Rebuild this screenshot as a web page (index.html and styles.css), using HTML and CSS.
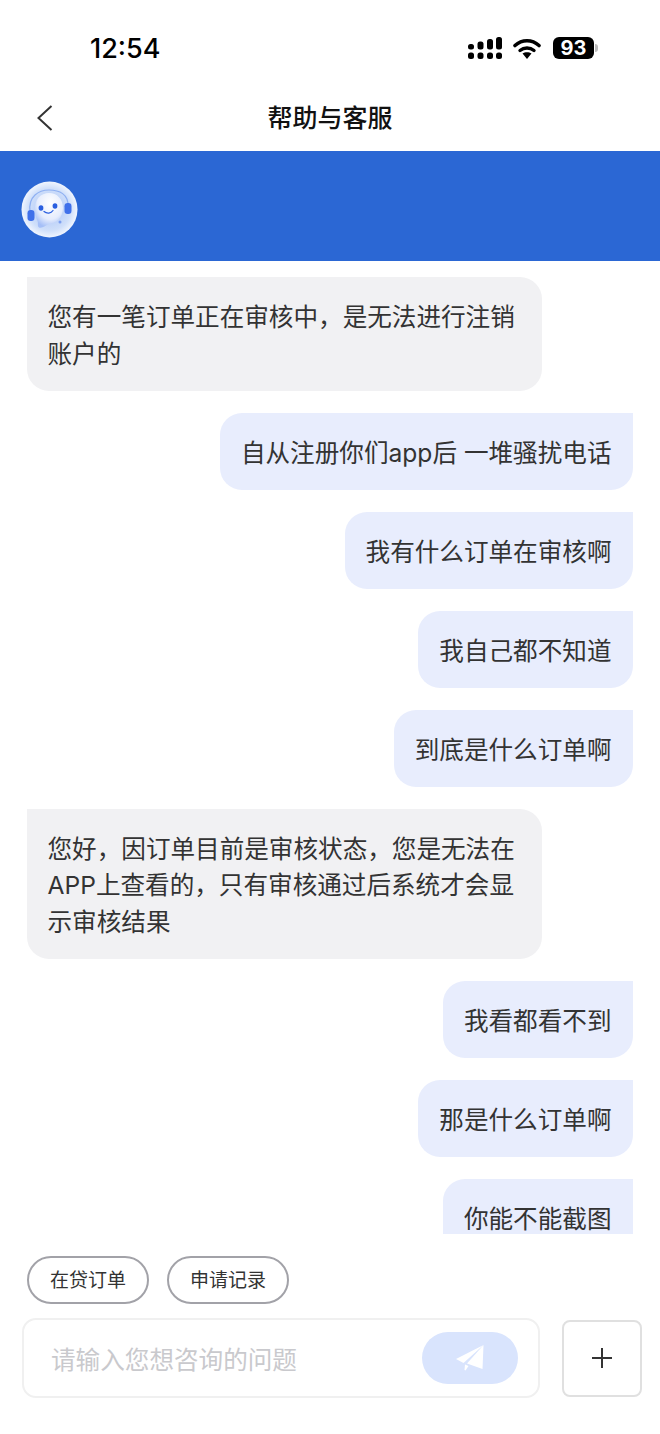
FILE: index.html
```html
<!DOCTYPE html>
<html lang="zh-CN">
<head>
    <meta charset="UTF-8">
    <meta name="viewport" content="width=device-width, initial-scale=1.0">
    <title>帮助与客服</title>
    <link rel="stylesheet" href="styles.css">
</head>
<body>
    <div class="page">
        <div class="status-bar">
            <span class="time">12:54</span>
            <div class="status-icons">
                <svg class="signal" width="34" height="22" viewBox="0 0 34 22">
                    <g fill="#000">
                        <rect x="0" y="7" width="6" height="5.5" rx="2.5"/>
                        <rect x="9.5" y="4.5" width="6" height="8" rx="2.5"/>
                        <rect x="19" y="2" width="6" height="10.5" rx="2.5"/>
                        <rect x="28" y="0" width="6" height="12.5" rx="2.5"/>
                        <rect x="0" y="15.5" width="6" height="6.5" rx="2.5"/>
                        <rect x="9.5" y="15.5" width="6" height="6.5" rx="2.5"/>
                        <rect x="19" y="15.5" width="6" height="6.5" rx="2.5"/>
                        <rect x="28" y="15.5" width="6" height="6.5" rx="2.5"/>
                    </g>
                </svg>
                <svg class="wifi" width="28" height="21" viewBox="0 0 28 21">
                    <path d="M2 7.5C9 1.2 19 1.2 26 7.5" fill="none" stroke="#000" stroke-width="3.6" stroke-linecap="round"/>
                    <path d="M7 12.5C11 9.2 17 9.2 21 12.5" fill="none" stroke="#000" stroke-width="3.4" stroke-linecap="round"/>
                    <path d="M9.5 15.5C12 13.8 16 13.8 18.5 15.5L14 21Z" fill="#000"/>
                </svg>
                <div class="battery">
                    <div class="battery-body">93</div>
                    <div class="battery-nub"></div>
                </div>
            </div>
        </div>

        <div class="nav-bar">
            <svg class="back-icon" width="16" height="26" viewBox="0 0 16 26">
                <path d="M14.5 1L1.5 13L14.5 25" fill="none" stroke="#333" stroke-width="2"/>
            </svg>
            <div class="nav-title">帮助与客服</div>
        </div>

        <div class="banner">
            <svg class="avatar" width="57" height="57" viewBox="0 0 57 57">
                <defs>
                    <radialGradient id="discFill" cx="50%" cy="50%" r="50%">
                        <stop offset="0%" stop-color="#a8c2f6"/>
                        <stop offset="75%" stop-color="#cfdffa"/>
                        <stop offset="100%" stop-color="#f0f5fe"/>
                    </radialGradient>
                    <radialGradient id="headFill" cx="55%" cy="30%" r="70%">
                        <stop offset="0%" stop-color="#ffffff"/>
                        <stop offset="65%" stop-color="#e6edfd"/>
                        <stop offset="100%" stop-color="#a5bff7"/>
                    </radialGradient>
                </defs>
                <circle cx="28.5" cy="28.5" r="28" fill="url(#discFill)"/>
                <path d="M9 31C7 15 18 9 28 9C38 9 48 13 47 26" fill="none" stroke="#8fb0f2" stroke-width="1.2"/>
                <path d="M14 30C13 18 20 12 28 12C36 12 42 18 42 27C42 37 35 42 28 43C25 44 21 48 18 46.500C16 45 17.500 42 16.500 40C15 37 14 33 14 30Z" fill="url(#headFill)"/>
                <rect x="6.500" y="29" width="7" height="11" rx="3.200" fill="#3f70ea"/>
                <rect x="43.500" y="22" width="7" height="11" rx="3.200" fill="#3f70ea"/>
                <ellipse cx="20" cy="27" rx="2.400" ry="2.800" fill="#2a5fe0"/>
                <ellipse cx="34" cy="25" rx="2.400" ry="2.800" fill="#2a5fe0"/>
                <path d="M23 30.500C26 33 30 32.500 32 29.500" fill="none" stroke="#2a5fe0" stroke-width="1.200" stroke-linecap="round"/>
                <circle cx="39" cy="41" r="1.500" fill="#7ea0f0"/>
            </svg>
        </div>

        <div class="chat">
            <div class="bubble bubble-left">您有一笔订单正在审核中，是无法进行注销账户的</div>
            <div class="bubble bubble-right">自从注册你们app后 一堆骚扰电话</div>
            <div class="bubble bubble-right">我有什么订单在审核啊</div>
            <div class="bubble bubble-right">我自己都不知道</div>
            <div class="bubble bubble-right">到底是什么订单啊</div>
            <div class="bubble bubble-left">您好，因订单目前是审核状态，您是无法在APP上查看的，只有审核通过后系统才会显示审核结果</div>
            <div class="bubble bubble-right">我看都看不到</div>
            <div class="bubble bubble-right">那是什么订单啊</div>
            <div class="bubble bubble-right">你能不能截图</div>
        </div>

        <div class="chips">
            <div class="chip">在贷订单</div>
            <div class="chip">申请记录</div>
        </div>

        <div class="input-row">
            <div class="input-box">
                <div class="placeholder">请输入您想咨询的问题</div>
                <div class="send-button">
                    <svg width="28" height="26" viewBox="0 0 28 26">
                        <path d="M27.500 0L0 14L7.500 18Z" fill="#fff"/>
                        <path d="M27.500 0L11 18.500L26.500 24Z" fill="#fff"/>
                        <path d="M9 19.500L12.500 21L9.500 25.500L8.500 25Z" fill="#fff"/>
                    </svg>
                </div>
            </div>
            <div class="plus-button">
                <svg width="20" height="20" viewBox="0 0 20 20">
                    <path d="M0 10H20M10 0V20" stroke="#333" stroke-width="2"/>
                </svg>
            </div>
        </div>
    </div>
</body>
</html>
```

FILE: styles.css
```css
body {
    margin: 0;
    background: #fff;
    font-family: "Inter", "Noto Sans CJK SC", sans-serif;
    color: #333;
}

.page {
    width: 660px;
    height: 1434px;
    display: flex;
    flex-direction: column;
    overflow: hidden;
}

.status-bar {
    height: 72px;
    padding: 12px 62px 1px 90px;
    display: flex;
    justify-content: space-between;
    align-items: center;
}

.time {
    font-size: 27px;
    font-weight: 500;
    color: #000;
}

.status-icons {
    display: flex;
    align-items: center;
    gap: 11px;
}

.battery {
    display: flex;
    align-items: center;
    margin-left: 1px;
}

.battery-body {
    width: 41px;
    height: 22px;
    background: #000;
    border-radius: 6px;
    color: #fff;
    font-size: 20px;
    font-weight: 700;
    line-height: 22px;
    text-align: center;
}

.battery-nub {
    width: 3px;
    height: 8px;
    margin-left: 1px;
    background: #bbb;
    border-radius: 0 3px 3px 0;
}

.nav-bar {
    height: 66px;
    padding-left: 37px;
    display: flex;
    align-items: center;
    position: relative;
}

.nav-title {
    position: absolute;
    left: 0;
    right: 0;
    top: 15px;
    text-align: center;
    font-size: 25px;
    line-height: 36px;
    font-weight: 500;
    color: #111;
}

.banner {
    height: 110px;
    padding: 6px 0 0 21px;
    box-sizing: border-box;
    background: #2b67d4;
    display: flex;
    align-items: center;
}

.chat {
    flex: 1;
    min-height: 0;
    overflow: hidden;
    padding: 16px 27px 0;
    display: flex;
    flex-direction: column;
    align-items: flex-start;
    gap: 21.500px;
}

.bubble {
    flex-shrink: 0;
    box-sizing: border-box;
    padding: 22px 21.500px 19px 21px;
    font-size: 24.600px;
    line-height: 36.500px;
    color: #333;
}

.bubble-left {
    width: 515px;
    padding-left: 20.500px;
    background: #f1f1f3;
    border-radius: 0 22px 22px 22px;
}

.bubble-right {
    align-self: flex-end;
    background: #e8edfd;
    border-radius: 22px 0 22px 22px;
}

.chips {
    padding: 22px 27px 0;
    display: flex;
    gap: 18px;
}

.chip {
    box-sizing: border-box;
    width: 122px;
    height: 48px;
    border: 2px solid #a2a2a8;
    border-radius: 24px;
    font-size: 19px;
    line-height: 46px;
    text-align: center;
    color: #333;
}

.input-row {
    padding: 14px 18px 36px 22px;
    display: flex;
    align-items: center;
    gap: 22px;
}

.input-box {
    box-sizing: border-box;
    width: 518px;
    height: 80px;
    padding: 0 20px 0 27px;
    border: 2px solid #f0f0f0;
    border-radius: 14px;
    display: flex;
    align-items: center;
    justify-content: space-between;
}

.placeholder {
    font-size: 24.600px;
    color: #c9c9cd;
}

.send-button {
    width: 96px;
    height: 52px;
    background: #d9e4fd;
    border-radius: 26px;
    display: flex;
    align-items: center;
    justify-content: center;
}

.plus-button {
    box-sizing: border-box;
    width: 80px;
    height: 77px;
    border: 2px solid #e0e0e0;
    border-radius: 8px;
    display: flex;
    align-items: center;
    justify-content: center;
}
```
